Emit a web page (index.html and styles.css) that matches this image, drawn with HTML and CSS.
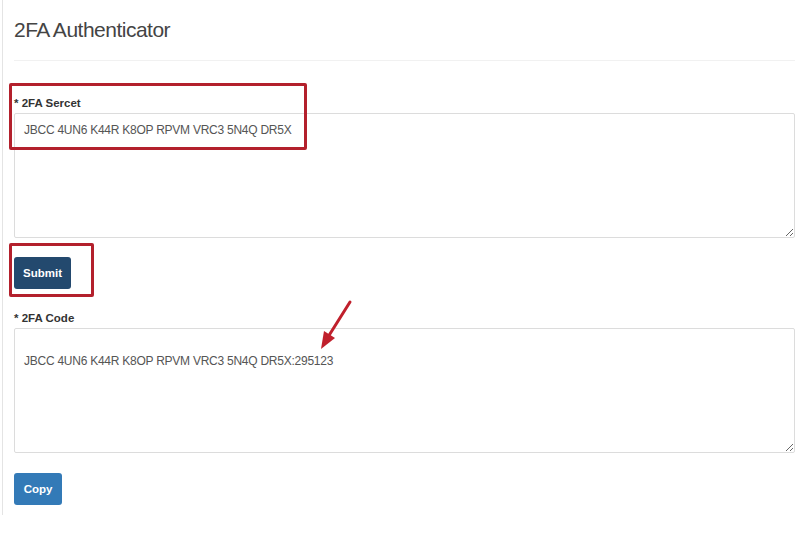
FILE: index.html
```html
<!DOCTYPE html>
<html lang="en">
<head>
    <meta charset="UTF-8">
    <meta name="viewport" content="width=device-width, initial-scale=1.0">
    <title>2FA Authenticator</title>
    <link rel="stylesheet" href="styles.css">
</head>
<body>
    <div class="panel">
        <div class="header">
            <h1>2FA Authenticator</h1>
        </div>
        <div class="group">
            <label class="label" for="secret">* 2FA Sercet</label>
            <textarea class="box" id="secret">JBCC 4UN6 K44R K8OP RPVM VRC3 5N4Q DR5X</textarea>
        </div>
        <button class="btn btn-dark">Submit</button>
        <div class="group group-code">
            <label class="label" for="code">* 2FA Code</label>
            <textarea class="box box-code" id="code">JBCC 4UN6 K44R K8OP RPVM VRC3 5N4Q DR5X:295123</textarea>
        </div>
        <button class="btn btn-blue">Copy</button>
    </div>

    <!-- annotations drawn over the screenshot -->
    <div class="mark mark-secret"></div>
    <div class="mark mark-submit"></div>
    <svg class="arrow" width="40" height="56" viewBox="0 0 40 56">
        <line x1="34" y1="3" x2="12" y2="38" stroke="#c0202c" stroke-width="3" stroke-linecap="round"/>
        <polygon points="5,50 8,32 19,39" fill="#c0202c"/>
    </svg>
</body>
</html>
```

FILE: styles.css
```css
body {
    margin: 0;
    position: relative;
    background-color: #fff;
    font-family: "Liberation Sans", Arial, sans-serif;
}
.panel {
    margin-left: 2px;
    height: 515px;
    border-left: 1px solid #e4e4e4;
    padding: 0 5px 0 11px;
    box-sizing: border-box;
}
.header {
    height: 61px;
    box-sizing: border-box;
    border-bottom: 1px solid #f1f1f1;
}
h1 {
    margin: 0;
    padding-top: 16px;
    font-size: 21px;
    line-height: 28px;
    font-weight: normal;
    letter-spacing: -0.5px;
    color: #444;
}
.group {
    margin-top: 35px;
}
.group-code {
    margin-top: 22px;
}
.label {
    display: block;
    font-size: 11.5px;
    line-height: 14px;
    font-weight: bold;
    color: #333;
    margin-bottom: 3px;
}
.box {
    display: block;
    width: 100%;
    height: 125px;
    box-sizing: border-box;
    margin: 0;
    padding: 8px 9px;
    border: 1px solid #dcdcdc;
    border-radius: 2px;
    font-family: "Liberation Sans", Arial, sans-serif;
    font-size: 12px;
    line-height: 17px;
    letter-spacing: -0.25px;
    color: #555;
    background-color: #fff;
    resize: vertical;
}
.box-code {
    padding-top: 24px;
}
.btn {
    display: block;
    height: 32px;
    border: none;
    border-radius: 3px;
    color: #fff;
    font-family: "Liberation Sans", Arial, sans-serif;
    font-size: 11.5px;
    font-weight: bold;
    cursor: pointer;
    padding: 0;
}
.btn-dark {
    margin-top: 19px;
    width: 57px;
    background-color: #23496e;
}
.btn-blue {
    margin-top: 20px;
    width: 48px;
    background-color: #337ab7;
}
.mark {
    position: absolute;
    border: 3px solid #b3202c;
    border-radius: 2px;
    box-sizing: border-box;
}
.mark-secret {
    left: 9px;
    top: 83px;
    width: 298px;
    height: 67px;
}
.mark-submit {
    left: 9px;
    top: 243px;
    width: 85px;
    height: 54px;
}
.arrow {
    position: absolute;
    left: 316px;
    top: 299px;
}
```
